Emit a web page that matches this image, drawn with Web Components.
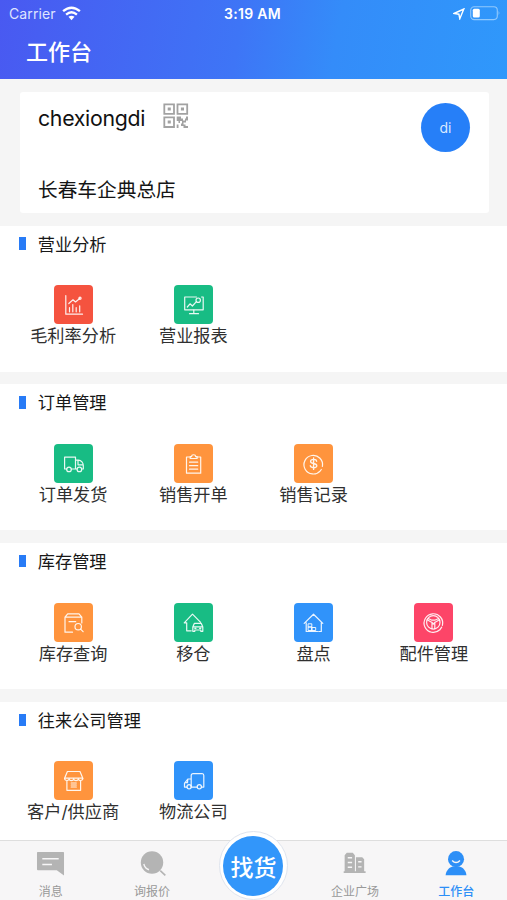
<!DOCTYPE html>
<html lang="zh-CN"><head><meta charset="utf-8"><title>工作台</title>
<style>
html,body{margin:0;height:100%}
body{font-family:Inter,"Noto Sans CJK SC",sans-serif;color:#1c1c1c;background:#f5f5f5;overflow:hidden}
</style></head><body>
<work-app></work-app>
<script>
const define=(name,html)=>customElements.define(name,class extends HTMLElement{
  connectedCallback(){
    if(this.shadowRoot)return;
    const root=this.attachShadow({mode:'open'});
    root.innerHTML=typeof html==='function'?html(this):html;
  }
});

/* Tile glyphs, drawn on a 39px tile */
const tileIcons={
  profit:'<path d="M11.8 10.5V29.2H28.5"/><path d="M14.8 18.5L19 14.8L21.5 17L26 13.3"/><circle cx="26" cy="13.3" r="1.1"/><path d="M15.5 22.5V26.8M18.8 19.5V26.8M22.2 22.5V26.8M25.7 20.8V26.8" stroke-width="1.2"/>',
  report:'<path d="M22.5 12H10.7V24.8H29.2V18.5M27.5 12H29.2V18.5"/><path d="M13.3 22L16 18.8L18.4 21L22.2 16.8"/><circle cx="24.2" cy="15.2" r="2.2"/><path d="M19.8 25V28.5M15.5 28.7H24.5"/>',
  truck:'<path d="M12.6 25H10.6V13.2H21.5V25M17.4 25H22.9M21.5 16.2H24.5C27.3 16.2 29.3 19 29.3 21.5V25H27.8M24 16.5V20.8H29.1"/><circle cx="15" cy="25.4" r="2.3"/><circle cx="25.4" cy="25.4" r="2.3"/>',
  clipboard:'<path d="M16 13H12.5V29.2H26.7V13H23.2"/><path d="M16.2 14.5V12.6H17.6C17.6 10.1 21.6 10.1 21.6 12.6H23.1V14.5Z"/><path d="M15.5 18.2H23.7M15.5 21.7H23.7M15.5 25.2H23.7"/>',
  dollar:'<path d="M26.3 26.8A9.3 9.3 0 1 1 28.4 22.5M27.3 25.5L26.3 26.8"/><path d="M22.6 17.3C22.4 14.8 16.6 14.8 16.6 17.4C16.6 20.5 22.8 18.4 22.8 21.7C22.8 24.5 16.4 24.4 16.3 21.6M19.6 14V25.4" stroke-width="1.35"/>',
  query:'<path d="M11 16V29.2H18.5M27.8 20V14.2L25 10.8H13.7L11 14.2V16M11 14.2H27.8M15 18.7H21.7"/><circle cx="24.2" cy="23.7" r="3.2"/><path d="M26.6 26.1L29.1 28.7"/>',
  garage:'<path d="M17.2 27.8H12.7V19.8H10.2L18.5 11.2L26.6 19.4"/><path d="M18.8 24.1L20.3 20.4H27.3L28.8 24.1V28.3H26.8V27H20.8V28.3H18.8ZM18.8 23.8H28.8M20.8 25.3H22M25.6 25.3H26.8"/>',
  house:'<path d="M10.2 20.4L19.5 11.2L28.8 20.4M27.3 19.5V28.5H24.7M12.2 19.8V28.5H23.5"/><path d="M14.5 20.8H17.8V24H14.5ZM14.5 24H18V27.5H14.5ZM18 24.5H21.7V27.5H18Z" stroke-width="1"/>',
  wheel:'<path d="M25.8 26.8A9.3 9.3 0 1 1 28.4 22.3M27.7 24.1L25.8 26.8"/><circle cx="19.3" cy="19.4" r="6.7"/><path d="M13.2 16.8L18 19.5V25.8M25.5 16.8L20.8 19.5V25.8M14.1 15.5L18 17.2H20.7L24.7 15.5M18 19.5L19.4 21L20.8 19.5"/>',
  shop:'<path d="M13.4 10.5H26L28.8 17.2H10.6Z"/><path d="M10.6 17.3C10.6 20.2 15.1 20.2 15.1 17.7C15.1 20.2 19.7 20.2 19.7 17.7C19.7 20.2 24.3 20.2 24.3 17.7C24.3 20.2 28.8 20.2 28.8 17.3M12.9 20V29.3H26.6V20M17.2 22H22.3M17.2 24H22.3M17.2 26H22.3"/>',
  delivery:'<path d="M13.1 26.1H10.5V22.3L13.8 18H17.2V26.1H17M13.8 18L13.5 21.7H10.8M17.2 20.6V14.6C17.2 13.2 17.8 12.6 19.2 12.6H28.2C29.4 12.6 29.8 13.2 29.8 14.5V26.1H27.4M23.2 26.1H17.2"/><circle cx="15.1" cy="25.7" r="2.1"/><circle cx="25.3" cy="25.7" r="2.1"/>'
};

/* Tab glyphs, drawn on a 30px box */
const tabIcons={
  message:'<path fill="currentColor" d="M1.8 3H28.2Q29 3 29 4V27.5L21.5 22H2Q1 22 1 21V4Q1 3 1.8 3Z"/><path d="M6.5 10.2H23.5M6.5 16H16.5" stroke="#f7f6f7" stroke-width="1.6"/>',
  search:'<circle cx="14.5" cy="14" r="11.6" fill="currentColor"/><path d="M23 22.5L28.3 27.4" stroke="currentColor" stroke-width="1.7"/><path d="M6 15.5Q7.2 20.2 11.3 21.5" stroke="#f7f6f7" stroke-width="1.4" fill="none"/>',
  building:'<path fill="currentColor" d="M4.8 6.5L7 4H13.2L15.4 6.5V23H16.5V8.5H23L25 10.5V23H26.5V24.8H3.8V23H4.8Z"/><path d="M8 9H12.5M8 14H12.5M8 19H12.5M18.8 13.2H22.3M18.8 18.5H22.3" stroke="#f7f6f7" stroke-width="1.5"/>',
  person:'<circle cx="14.5" cy="10.5" r="8.3" fill="currentColor"/><path fill="currentColor" d="M3.7 27.3C4 22.3 7.7 18.8 11 18.1H18C21.5 18.8 25 22.3 25.3 27.3Z"/><path d="M10.5 11.8Q14.5 16.1 18.6 11.8" stroke="#f7f6f7" stroke-width="1.5" fill="none"/>'
};

define('status-bar',`<style>
:host{display:grid;grid-template-columns:1fr auto 1fr;align-items:center;height:27px;padding:0 6px 0 9px;color:#fff;font-size:14px}
.left,.right{display:flex;align-items:center}.left{gap:6px;color:#dfe4ff;letter-spacing:.12px}.right{justify-content:flex-end;gap:5px}
.time{font-weight:600;font-size:14px;letter-spacing:.3px;margin-left:-2px;margin-right:3px}svg{display:block}
</style><div class="left"><span>Carrier</span><svg width="19" height="15" viewBox="0 0 19 15" fill="none" stroke="#fff" stroke-width="2.4"><path d="M1.1 5.2Q9.5-1.8 17.9 5.2M4.1 8.6Q9.5 4.1 14.9 8.6"/><path d="M6.5 10.8Q9.5 8.8 12.5 10.8L9.5 14.2Z" fill="#fff" stroke="none"/></svg></div>
<span class="time">3:19 AM</span>
<div class="right"><svg width="12" height="12" viewBox="0 0 12 12" fill="none" stroke="#fff" stroke-width="1.4"><path d="M1 5.5L10.8 1L6.8 10.7L5.9 6.2Z"/></svg><svg width="31" height="15" viewBox="0 0 31 15"><rect x=".7" y=".8" width="26.6" height="12.8" rx="3.5" fill="none" stroke="#91c9fd" stroke-width="1.1"/><rect x="2.8" y="2.8" width="7" height="8.8" rx="1.5" fill="#fff"/><path d="M28.6 4.8Q30.3 7 28.6 9.3Z" fill="#91c9fd"/></svg></div>`);

define('app-header',`<style>
:host{display:block;height:79px;background:linear-gradient(100deg,#4959f1 0%,#3e75f6 47%,#348cf9 66%,#2f98fb 100%)}
h1{margin:0;padding-left:26px;font-size:22px;line-height:50px;font-weight:500;color:#fff}
</style><status-bar></status-bar><h1>工作台</h1>`);

define('qr-icon',`<style>:host{display:block;width:26px;height:26px;margin-bottom:5px}svg{display:block}</style>
<svg width="26" height="26" viewBox="0 0 26 26" fill="none" stroke="#a2a2a2" stroke-width="1.8"><path d="M1.3 1.3H11V10.8H1.3ZM14.5 1.3H24.2V10.8H14.5ZM1.3 14.3H11V24H1.3Z"/><path fill="#a2a2a2" stroke="none" d="M4.7 4.6H7.8V7.6H4.7ZM17.9 4.6H21V7.6H17.9ZM4.7 17.6H7.8V20.6H4.7ZM13.7 13.5H18V15.5H20V17.5H22V15.5H23V13.5H25V17.5H23V19.4H20.5V21.5H22.5V23H25V25H20.5V23H18V20.5H19V18H17V20H15.5V18H13.7ZM13.7 21.5H15.5V25H13.7Z"/></svg>`);

define('profile-card',`<style>
:host{display:flex;justify-content:space-between;box-sizing:border-box;height:121.5px;margin:12.5px 18px 12.5px 19.5px;padding:11px 19px 0 18.5px;background:#fff;border-radius:3px}
.row{display:flex;align-items:center;gap:17.5px;height:31px}.name{font-size:21.3px;letter-spacing:-.3px;color:#111}
.store{margin-top:39px;font-size:19.7px;line-height:34px;color:#151515}
.avatar{width:49px;height:49px;border-radius:50%;background:#267ff8;color:#d9eaff;display:flex;align-items:center;justify-content:center;font-size:14px}
</style><div><div class="row"><span class="name">chexiongdi</span><qr-icon></qr-icon></div><div class="store">长春车企典总店</div></div><div class="avatar">di</div>`);

define('menu-section',el=>`<style>
:host{display:block;box-sizing:border-box;height:146px;margin-bottom:12.8px;background:#fff}
h2{display:flex;align-items:center;gap:12px;margin:0;padding-left:19.3px;height:35px;font-size:17.2px;font-weight:400;color:#181818}
h2::before{content:"";width:6.5px;height:12.5px;background:#287bf6;margin-top:1px}
.grid{display:grid;grid-template-columns:repeat(4,120.25px);padding:24.5px 13px 0}
</style><h2>${el.getAttribute('heading')}</h2><div class="grid"><slot></slot></div>`);

define('menu-tile',el=>`<style>
:host{display:flex;flex-direction:column;align-items:center}
.box{width:39px;height:39px;border-radius:4px;background:${el.getAttribute('color')}}
svg{display:block}span{font-size:17.2px;line-height:23px;white-space:nowrap;color:#303030}
</style><div class="box"><svg width="39" height="39" viewBox="0 0 39 39" fill="none" stroke="#fff" stroke-opacity=".9" stroke-width="1.2" stroke-linejoin="round" stroke-linecap="round">${tileIcons[el.getAttribute('icon')]}</svg></div><span><slot></slot></span>`);

define('tab-item',el=>`<style>
:host{display:flex;flex-direction:column;align-items:center;padding-top:8px;color:#b4b4b4;font-size:12px}
:host([active]){color:#2d8ff7;font-weight:500}
svg{display:block}span{line-height:16px;margin-top:7px;color:#999}
:host([active]) span{color:inherit}
</style><svg width="29" height="28" viewBox="0 0 30 29">${tabIcons[el.getAttribute('icon')]}</svg><span><slot></slot></span>`);

define('find-button',`<style>
:host{display:flex;justify-content:center;margin-top:-10px}
.ring{box-sizing:border-box;width:69px;height:69px;border-radius:50%;border:1px solid #dfe4ee;background:#fff;display:flex;align-items:center;justify-content:center;flex:none}
.disc{width:60px;height:60px;border-radius:50%;background:#3296fa;color:#fff;font-size:23px;font-weight:500;display:flex;align-items:center;justify-content:center}
</style><div class="ring"><div class="disc">找货</div></div>`);

define('tab-bar',`<style>
:host{display:grid;grid-template-columns:repeat(5,1fr);box-sizing:border-box;height:60px;background:#f7f6f7;border-top:1px solid #dedede;flex:none;position:relative}
</style><tab-item icon="message">消息</tab-item><tab-item icon="search">询报价</tab-item><find-button></find-button><tab-item icon="building">企业广场</tab-item><tab-item icon="person" active>工作台</tab-item>`);

define('work-app',`<style>
:host{display:flex;flex-direction:column;height:900px;width:507px;overflow:hidden}
main{flex:1;min-height:0;overflow:hidden;display:flow-root}
</style><app-header></app-header><main><profile-card></profile-card>
<menu-section heading="营业分析"><menu-tile icon="profit" color="#f5533f">毛利率分析</menu-tile><menu-tile icon="report" color="#18bc84">营业报表</menu-tile></menu-section>
<menu-section heading="订单管理"><menu-tile icon="truck" color="#18bc84">订单发货</menu-tile><menu-tile icon="clipboard" color="#ff943d">销售开单</menu-tile><menu-tile icon="dollar" color="#ff943d">销售记录</menu-tile></menu-section>
<menu-section heading="库存管理"><menu-tile icon="query" color="#ff943d">库存查询</menu-tile><menu-tile icon="garage" color="#18bc84">移仓</menu-tile><menu-tile icon="house" color="#3093fa">盘点</menu-tile><menu-tile icon="wheel" color="#fd4568">配件管理</menu-tile></menu-section>
<menu-section heading="往来公司管理"><menu-tile icon="shop" color="#ff943d">客户/供应商</menu-tile><menu-tile icon="delivery" color="#3093fa">物流公司</menu-tile></menu-section>
</main><tab-bar></tab-bar>`);
</script></body></html>
